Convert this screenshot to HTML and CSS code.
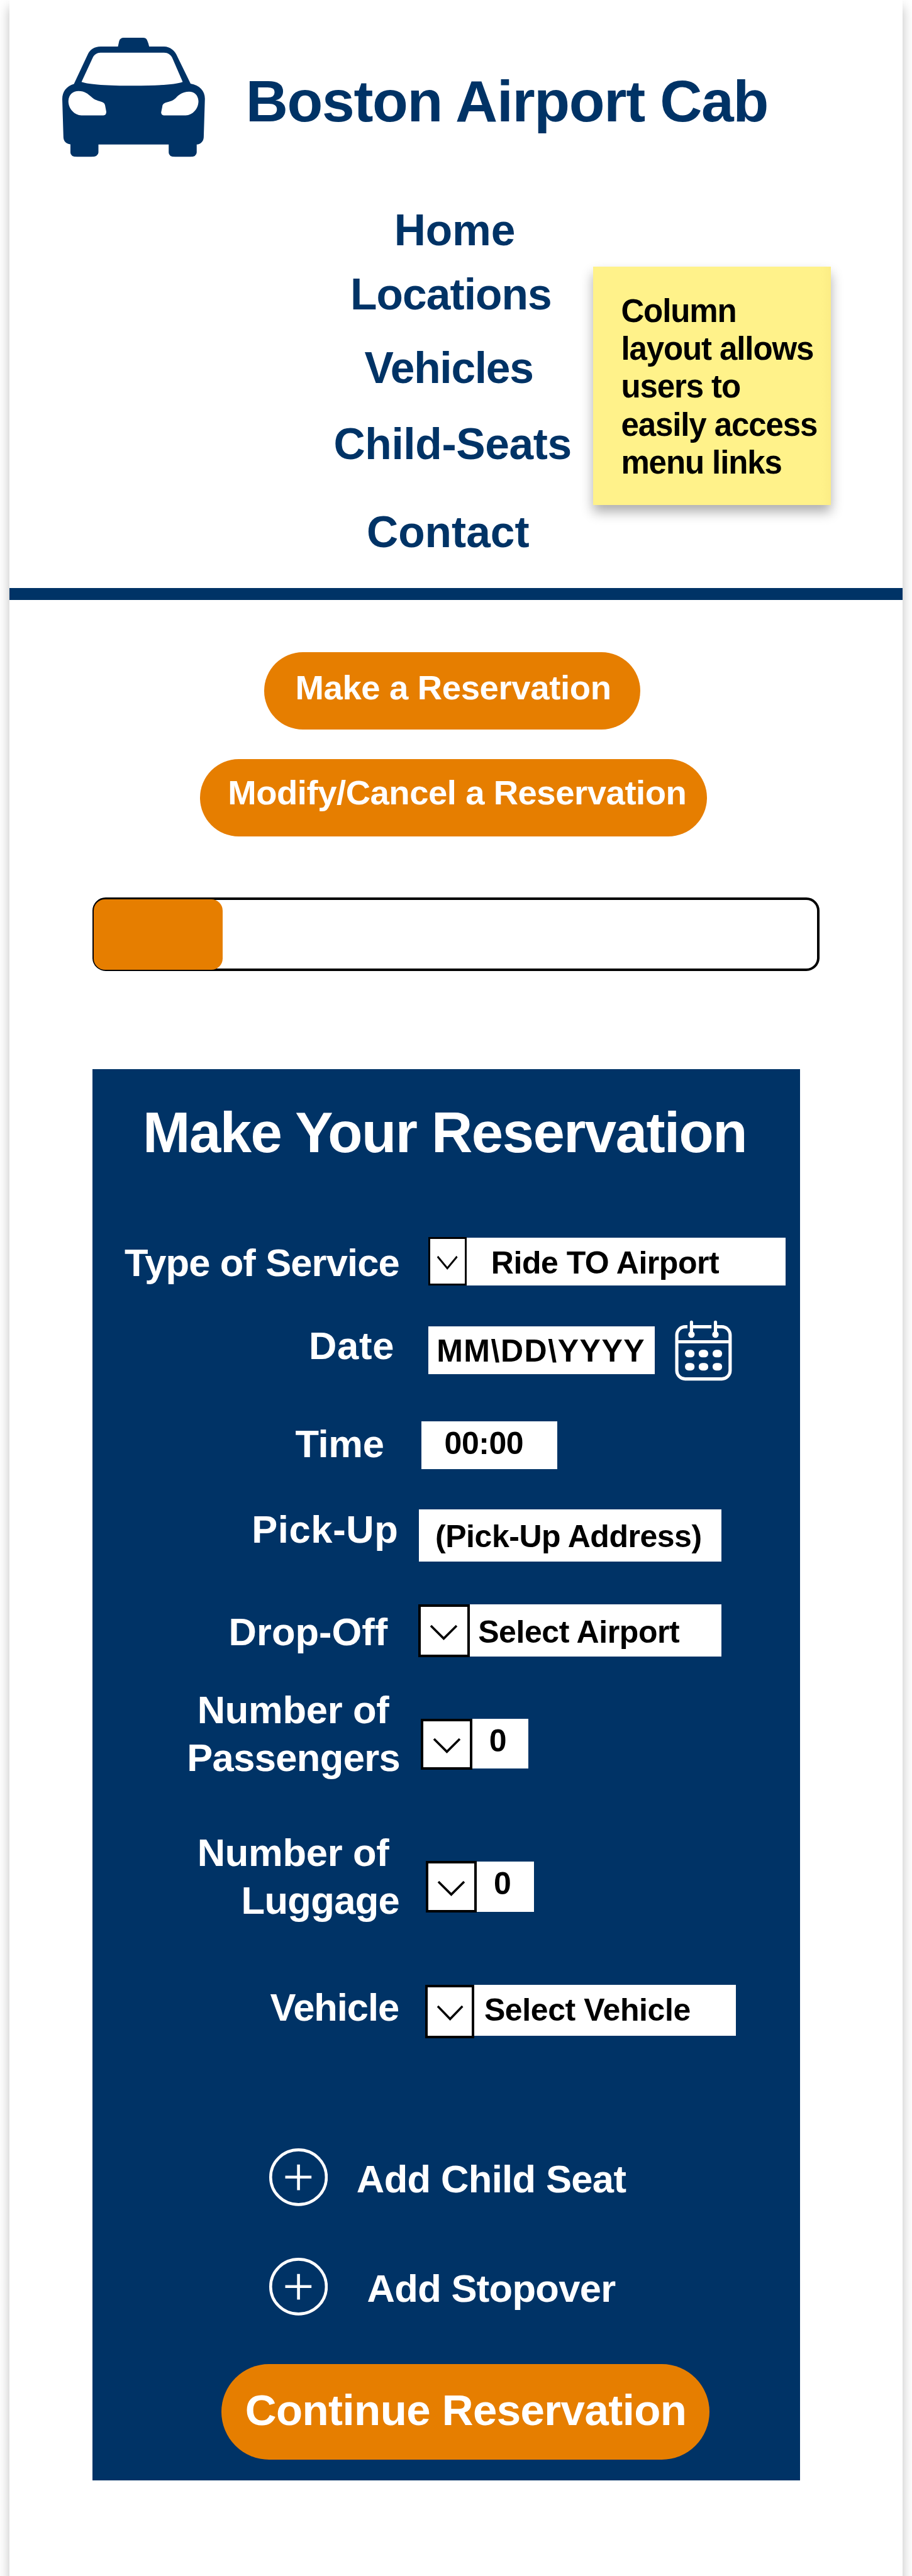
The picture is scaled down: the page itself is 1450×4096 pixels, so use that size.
FILE: index.html
```html
<!DOCTYPE html>
<html lang="en">
<head>
<meta charset="utf-8">
<title>Boston Airport Cab</title>
<link rel="stylesheet" href="styles.css">
</head>
<body>
<div class="page">
  <header class="header">
    <div class="brand">
      <svg class="brand-icon" viewBox="213 187 490 583" preserveAspectRatio="none" aria-hidden="true">
        <path fill="#036" fill-rule="evenodd" d="M404 230 L408 204 Q411 187 424 187 H490 Q501 187 504 199 Q509 215 511 230 H562 C582 230 600 250 608 280 L653 412 C685 420 704 450 702 492 L698 675 C697 695 688 708 674 710 V749 Q673 770 652 770 H600 Q578 770 578 749 V710 H337 V749 Q336 770 312 770 H264 Q241 770 241 749 V709 C226 706 218 695 217 675 L213 487 C213 450 228 424 253 413 L300 270 C308 245 322 230 345 230 Z
        M344 260 C332 260 324 270 319 280 L279 403 C305 416 370 422 456 422 C540 422 600 416 626 403 L590 285 C585 270 575 260 562 260 Z
        M269 448 C250 448 235 465 234 497 C234 535 255 566 279 567 H354 Q364 567 364 550 L360 520 C359 510 356 505 348 501 C330 494 320 488 312 476 C302 463 290 448 269 448 Z
        M648 451 C625 451 612 467 603 481 C596 493 583 499 567 505 C559 510 556 516 556 525 L552 553 Q553 567 561 567 H636 C660 566 680 535 680 497 C679 468 666 451 648 451 Z"/>
      </svg>
      <h1 class="brand-name">Boston Airport Cab</h1>
    </div>
    <nav class="nav">
      <a class="nav-link home">Home</a>
      <a class="nav-link locations">Locations</a>
      <a class="nav-link vehicles">Vehicles</a>
      <a class="nav-link child-seats">Child-Seats</a>
      <a class="nav-link contact">Contact</a>
    </nav>
    <aside class="note">Column<br>layout allows<br>users to<br>easily access<br>menu links</aside>
  </header>

  <main class="main">
    <button class="pill make">Make a Reservation</button>
    <button class="pill modify">Modify/Cancel a Reservation</button>
    <div class="progress"><div class="progress-fill"></div></div>

    <section class="panel">
      <h2 class="panel-title">Make Your Reservation</h2>

      <div class="row service">
        <span class="label">Type of Service</span>
        <div class="field">
          <span class="arrow"><svg class="chevron" viewBox="0 0 43 23" preserveAspectRatio="none"><path d="M1 1 L21.5 21 L42 1"/></svg></span>
          <span class="value">Ride TO Airport</span>
        </div>
      </div>
      <div class="row date">
        <span class="label">Date</span>
        <div class="field">
          <span class="value">MM\DD\YYYY</span>
          <svg class="calendar" viewBox="64 60 300 320" aria-hidden="true">
            <g fill="none" stroke="#fff" stroke-width="17">
              <path d="M130 95 H118 A44 44 0 0 0 74 139 V326 A44 44 0 0 0 118 369 H310 A44 44 0 0 0 354 326 V139 A44 44 0 0 0 310 95 H282 M155 95 H256 M74 174 H354"/>
              <path stroke-linecap="round" d="M151 71 V125 M277 71 V125"/>
            </g>
            <g fill="#fff">
              <circle cx="151" cy="136" r="17"/><circle cx="277" cy="136" r="17"/>
              <rect x="117" y="216" width="50" height="40" rx="19"/><rect x="189" y="216" width="50" height="40" rx="19"/><rect x="262" y="216" width="50" height="40" rx="19"/>
              <rect x="117" y="285" width="50" height="40" rx="19"/><rect x="189" y="285" width="50" height="40" rx="19"/><rect x="262" y="285" width="50" height="40" rx="19"/>
            </g>
          </svg>
        </div>
      </div>
      <div class="row time">
        <span class="label">Time</span>
        <div class="field"><span class="value">00:00</span></div>
      </div>
      <div class="row pickup">
        <span class="label">Pick-Up</span>
        <div class="field"><span class="value">(Pick-Up Address)</span></div>
      </div>
      <div class="row dropoff">
        <span class="label">Drop-Off</span>
        <div class="field">
          <span class="arrow"><svg class="chevron" viewBox="0 0 43 23" preserveAspectRatio="none"><path d="M1 1 L21.5 21 L42 1"/></svg></span>
          <span class="value">Select Airport</span>
        </div>
      </div>
      <div class="row double passengers">
        <span class="label"><span class="line first">Number of</span><span class="line second">Passengers</span></span>
        <div class="field">
          <span class="arrow"><svg class="chevron" viewBox="0 0 43 23" preserveAspectRatio="none"><path d="M1 1 L21.5 21 L42 1"/></svg></span>
          <span class="value">0</span>
        </div>
      </div>
      <div class="row double luggage">
        <span class="label"><span class="line first">Number of</span><span class="line second">Luggage</span></span>
        <div class="field">
          <span class="arrow"><svg class="chevron" viewBox="0 0 43 23" preserveAspectRatio="none"><path d="M1 1 L21.5 21 L42 1"/></svg></span>
          <span class="value">0</span>
        </div>
      </div>
      <div class="row vehicle">
        <span class="label">Vehicle</span>
        <div class="field">
          <span class="arrow"><svg class="chevron" viewBox="0 0 43 23" preserveAspectRatio="none"><path d="M1 1 L21.5 21 L42 1"/></svg></span>
          <span class="value">Select Vehicle</span>
        </div>
      </div>

      <div class="add seat">
        <svg class="plus" viewBox="0 0 93.3 91.8"><ellipse cx="46.6" cy="45.9" rx="44.3" ry="43.5"/><path d="M25.5 45.7 H67.2 M46.6 25.8 V66.5"/></svg>
        <span class="add-text">Add Child Seat</span>
      </div>
      <div class="add stopover">
        <svg class="plus" viewBox="0 0 93.3 91.8"><ellipse cx="46.6" cy="45.9" rx="44.3" ry="43.5"/><path d="M25.5 45.7 H67.2 M46.6 25.8 V66.5"/></svg>
        <span class="add-text">Add Stopover</span>
      </div>

      <button class="pill continue">Continue Reservation</button>
    </section>
  </main>
</div>
</body>
</html>
```
FILE: styles.css
```css
* { box-sizing: border-box; }

html, body { margin: 0; overflow: hidden; background: #fff; }

body {
  height: 4096px;
  font-family: "Liberation Sans", Arial, Helvetica, sans-serif;
  font-weight: bold;
}

.page {
  width: 1420px;
  height: 4130px;
  margin-left: 15.3px;
  background: #fff;
  box-shadow: 0 11px 18px rgba(0, 0, 0, .26);
}

/* Header */
.header {
  position: relative;
  height: 953.8px;
  padding: 60.4px 0 0 83.4px;
  border-bottom: 19px solid #036;
}
.brand { display: flex; align-items: flex-start; height: 189.3px; }
.brand-icon { display: block; width: 227.2px; height: 189.3px; flex: none; }
.brand-name {
  margin: 55px 0 0 64.9px;
  color: #036;
  font-size: 93px;
  line-height: 1;
  letter-spacing: -1.33px;
  white-space: nowrap;
}
.nav { display: flex; flex-direction: column; align-items: flex-start; margin-top: 82.2px; }
.nav-link { color: #036; font-size: 69.5px; line-height: 1; white-space: nowrap; }
.nav-link.home { margin-left: 528.1px; letter-spacing: -.18px; }
.nav-link.locations { margin: 32.3px 0 0 458.3px; letter-spacing: -.93px; }
.nav-link.vehicles { margin: 48.2px 0 0 480.8px; letter-spacing: -1.26px; }
.nav-link.child-seats { margin: 51.4px 0 0 431.8px; letter-spacing: -.36px; }
.nav-link.contact { margin: 70.7px 0 0 484.3px; letter-spacing: -.02px; }

.note {
  position: absolute;
  left: 927.9px;
  top: 423.7px;
  width: 378px;
  height: 379px;
  padding: 41.1px 0 0 44.2px;
  background: linear-gradient(to right, #fff28a 96%, #fced86);
  box-shadow: 0 11px 18px rgba(0, 0, 0, .32);
  color: #000;
  font-size: 51px;
  line-height: 60.3px;
  letter-spacing: -1.1px;
  white-space: nowrap;
}

/* Actions */
.main { display: flex; flex-direction: column; align-items: flex-start; }
.pill {
  display: block;
  border: 0;
  border-radius: 77px;
  background: #e67e00;
  color: #fff;
  font: inherit;
  line-height: 1;
  text-align: left;
  white-space: nowrap;
}
.pill.make, .pill.modify { display: flex; align-items: flex-start; height: 122.7px; font-size: 54.5px; }
.pill.make { width: 598px; margin: 83.4px 0 0 405px; padding: 30px 0 0 49.2px; letter-spacing: -.38px; }
.pill.modify { width: 806px; margin: 47.5px 0 0 302.5px; padding: 26.3px 0 0 44.5px; letter-spacing: -.48px; }

.progress {
  width: 1155.2px;
  height: 117px;
  margin: 97.3px 0 0 132.1px;
  border: 4px solid #000;
  border-radius: 21px;
}
.progress-fill {
  width: 205px;
  height: 112px;
  margin: -1.5px 0 0 -2.3px;
  border-radius: 18px;
  background: #e67e00;
}

/* Reservation form */
.panel {
  display: flex;
  flex-direction: column;
  align-items: flex-start;
  width: 1124.4px;
  height: 2244.4px;
  margin: 155.4px 0 0 132.2px;
  padding-top: 56.6px;
  background: #036;
  color: #fff;
}
.panel-title {
  margin: 0 0 119.9px 79.6px;
  font-size: 90.5px;
  line-height: 1;
  letter-spacing: -1.55px;
  white-space: nowrap;
}

.row { display: grid; grid-template-rows: 100%; align-items: start; white-space: nowrap; }
.label { display: block; font-size: 61.5px; line-height: 1; }
.field { display: flex; align-items: stretch; height: 100%; }
.value { background: #fff; color: #000; font-size: 50px; line-height: 1; }
.arrow {
  display: flex;
  flex: none;
  align-items: center;
  justify-content: center;
  padding-top: 5px;
  border: 4px solid #000;
  background: #fff;
}
.chevron { width: 43px; height: 23.4px; fill: none; stroke: #000; stroke-width: 3.6; overflow: visible; }

.service { grid-template-columns: 533.7px auto; height: 77.4px; }
.service .label { padding: 10.4px 0 0 50.6px; letter-spacing: -.89px; }
.service .arrow { width: 60.8px; border-width: 3px; }
.service .chevron { width: 32.4px; height: 21.6px; }
.service .value { width: 507px; margin-top: 1.6px; padding: 14.8px 0 0 38.9px; letter-spacing: -.48px; }

.date { grid-template-columns: 533.7px auto; height: 76px; margin-top: 64.4px; }
.date .label { padding: .7px 0 0 343.4px; letter-spacing: .73px; }
.date .value { width: 359.7px; padding: 14.4px 0 0 13px; letter-spacing: 1.53px; }
.calendar { flex: none; width: 90.9px; height: 96.9px; margin: -9.9px 0 0 32.4px; }

.time { grid-template-columns: 522.2px auto; height: 76px; margin-top: 75.1px; }
.time .label { padding: 4.9px 0 0 321.9px; letter-spacing: -.28px; }
.time .value { width: 216px; padding: 10.6px 0 0 36.9px; letter-spacing: -.47px; }

.pickup { grid-template-columns: 518.4px auto; height: 83.5px; margin-top: 64.3px; }
.pickup .label { padding: .9px 0 0 252.7px; letter-spacing: .63px; }
.pickup .value { width: 481.5px; padding: 18px 0 0 26.2px; letter-spacing: -.47px; }

.dropoff { grid-template-columns: 517.5px auto; height: 84px; margin-top: 67.5px; }
.dropoff .label { padding: 13.1px 0 0 216.1px; font-variant-ligatures: none; }
.dropoff .arrow { width: 81.6px; }
.dropoff .value { width: 400.9px; margin-bottom: 1px; padding: 18.9px 0 0 13.6px; letter-spacing: -.42px; }

.double { height: 151.4px; }
.double .label { line-height: 75.7px; }
.line { display: block; }
.double .first { padding-left: 166.2px; letter-spacing: -.29px; }
.double .arrow { width: 81.5px; }

.passengers { grid-template-columns: 521.8px auto; margin-top: 46.2px; }
.passengers .second { padding-left: 149.7px; letter-spacing: -.63px; }
.passengers .field { height: 81.5px; margin-top: 51.6px; }
.passengers .value { width: 89.5px; margin-bottom: 2px; padding: 10.3px 0 0 27px; }

.luggage { grid-template-columns: 529.1px auto; margin-top: 75.6px; }
.luggage .second { padding-left: 236.1px; letter-spacing: -.67px; }
.luggage .field { height: 82.2px; margin-top: 50.9px; }
.luggage .value { width: 90.7px; margin: 1px 0; padding: 9.9px 0 0 27px; }

.vehicle { grid-template-columns: 528.5px auto; height: 84.5px; margin-top: 96.9px; }
.vehicle .label { padding: 4.6px 0 0 282.1px; letter-spacing: -1.06px; }
.vehicle .arrow { width: 78.5px; }
.vehicle .chevron { width: 41.3px; }
.vehicle .value { width: 415.5px; margin-bottom: 4px; padding: 14.4px 0 0 15.4px; letter-spacing: -.39px; }

.add { display: flex; align-items: flex-start; height: 91.8px; margin-left: 280.7px; white-space: nowrap; }
.add.seat { margin-top: 174.9px; }
.add.stopover { margin-top: 82.5px; }
.plus { flex: none; width: 93.3px; height: 91.8px; fill: none; stroke: #fff; stroke-width: 4.6; }
.add-text { font-size: 61.5px; line-height: 1; margin-top: 18.2px; }
.seat .add-text { margin-left: 45.4px; letter-spacing: -.64px; }
.stopover .add-text { margin-left: 62.1px; letter-spacing: -.69px; }

.pill.continue {
  display: flex;
  align-items: flex-start;
  width: 776.5px;
  height: 152px;
  margin: 77px 0 0 204.5px;
  padding: 39.6px 0 0 37.7px;
  font-size: 69px;
  letter-spacing: -.57px;
}
```
